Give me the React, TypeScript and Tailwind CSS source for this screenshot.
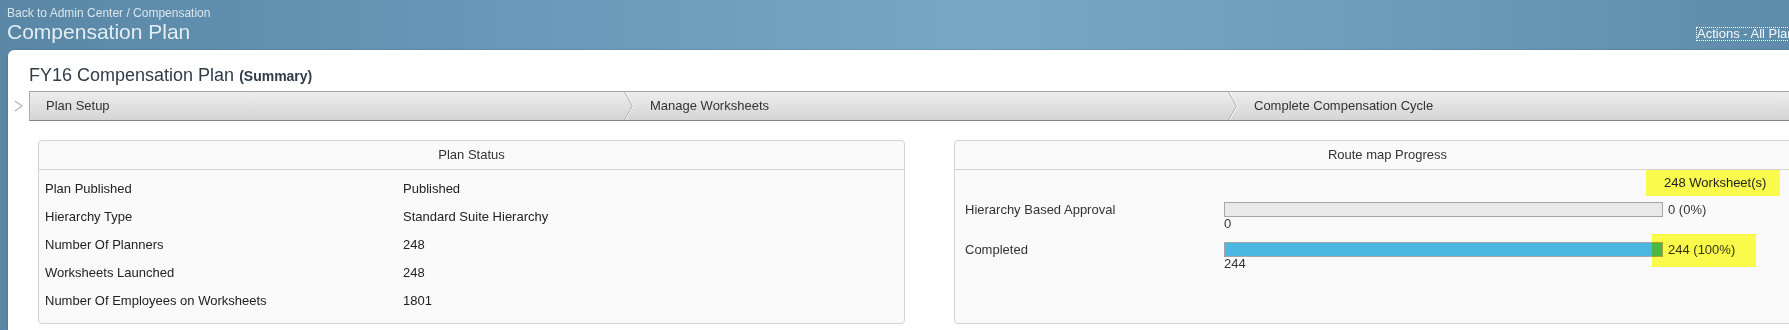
const STEPS = ['Plan Setup', 'Manage Worksheets', 'Complete Compensation Cycle'];

const STATUS_ROWS: [string, string][] = [
  ['Plan Published', 'Published'],
  ['Hierarchy Type', 'Standard Suite Hierarchy'],
  ['Number Of Planners', '248'],
  ['Worksheets Launched', '248'],
  ['Number Of Employees on Worksheets', '1801'],
];

function StepSeparator() {
  return (
    <svg width="10" height="28" viewBox="0 0 10 28" className="shrink-0">
      <polyline points="0.5,0 8.5,14 0.5,28" fill="none" stroke="#a9a9a9" strokeWidth="1" />
      <polyline points="1.5,0 9.5,14 1.5,28" fill="none" stroke="#f6f6f6" strokeWidth="1" />
    </svg>
  );
}

function Panel({ title, children }: { title: string; children: React.ReactNode }) {
  return (
    <section className="h-[184px] w-[867px] shrink-0 rounded-[4px] border border-[#d3d3d3] bg-[#fafafa]">
      <div className="flex h-[29px] items-center justify-center border-b border-[#d3d3d3] text-[13px] text-[#333]">
        {title}
      </div>
      {children}
    </section>
  );
}

function ProgressRow({
  label,
  count,
  summary,
  fill,
  highlight,
}: {
  label: string;
  count: string;
  summary: string;
  fill: number;
  highlight?: boolean;
}) {
  return (
    <div className="relative flex text-[13px] text-[#333]">
      <div className="h-[15px] w-[269px] shrink-0 pl-[10px] leading-[15px]">{label}</div>
      <div className="w-[439px] shrink-0">
        <div className="h-[15px] border border-[#a6a6a6] bg-[#e9e9e9]">
          <div className="h-full bg-[#4cb8e1]" style={{ width: `${fill}%` }} />
        </div>
        <div className="leading-[14px]">{count}</div>
      </div>
      <div className="h-[15px] pl-[5px] leading-[15px]">{summary}</div>
      {highlight && (
        <div className="pointer-events-none absolute left-[697px] top-[-8px] h-[33px] w-[104px] bg-[#ffff4c] mix-blend-multiply" />
      )}
    </div>
  );
}

export default function App() {
  return (
    <div className="h-[330px] w-[1789px] overflow-hidden bg-[linear-gradient(90deg,#5987a5_0%,#6a99b9_30%,#78a7c4_55%,#6d9cbb_78%,#5d8caa_100%)] font-['Liberation_Sans',Arial,sans-serif]">
      <header className="flex h-[50px] w-[1880px]">
        <div className="w-[1697px] shrink-0 pl-[7px] pt-[6px]">
          <div className="text-[12px] leading-[14px] text-[#d9e5ee]">Back to Admin Center / Compensation</div>
          <h1 className="text-[21px] leading-[24px] text-[#e4edf3]">Compensation Plan</h1>
        </div>
        <div className="pt-[21px]">
          <span className="inline-block text-[13px] leading-[12px] text-[#f4f8fb] outline-1 outline-dotted outline-white">
            Actions - All Plans
          </span>
        </div>
      </header>

      <main className="ml-[8px] h-[280px] w-[1880px] rounded-tl-[6px] bg-white shadow-[0_0_2px_rgba(0,0,0,0.25)]">
        <h2 className="pl-[21px] pt-[14px] text-[18px] leading-[22px] text-[#2f3c47]">
          FY16 Compensation Plan <span className="text-[14px] font-bold">(Summary)</span>
        </h2>

        <div className="mt-[4px] flex h-[30px] items-center">
          <div className="flex w-[21px] shrink-0 justify-start pl-[6px]">
            <svg width="9" height="12" viewBox="0 0 9 12">
              <polyline points="1,1 8,6 1,11" fill="none" stroke="#b3b3b3" strokeWidth="1.2" />
            </svg>
          </div>
          <nav className="flex h-[30px] w-[1860px] shrink-0 border-y border-l border-t-[#a3a3a3] border-b-[#858585] border-l-[#ababab] bg-gradient-to-b from-[#ededed] to-[#d5d5d5]">
            {STEPS.map((step) => (
              <div key={step} className="flex w-[604px] shrink-0 items-center">
                <span className="flex-1 pl-[16px] text-[13px] text-[#333]">{step}</span>
                <StepSeparator />
              </div>
            ))}
          </nav>
        </div>

        <div className="mt-[19px] flex gap-[49px] pl-[30px]">
          <Panel title="Plan Status">
            <div className="pt-[5px]">
              {STATUS_ROWS.map(([label, value]) => (
                <div key={label} className="flex h-[28px] items-center text-[13px] text-[#222]">
                  <span className="w-[364px] shrink-0 pl-[6px]">{label}</span>
                  <span>{value}</span>
                </div>
              ))}
            </div>
          </Panel>

          <Panel title="Route map Progress">
            <div className="ml-[691px] h-[26px] w-[134px] bg-[#fbfb4e] pl-[18px] text-[13px] leading-[26px] text-[#222]">
              248 Worksheet(s)
            </div>
            <div className="mt-[6px]">
              <ProgressRow label="Hierarchy Based Approval" count="0" summary="0 (0%)" fill={0} />
            </div>
            <div className="mt-[11px]">
              <ProgressRow label="Completed" count="244" summary="244 (100%)" fill={100} highlight />
            </div>
          </Panel>
        </div>
      </main>
    </div>
  );
}
